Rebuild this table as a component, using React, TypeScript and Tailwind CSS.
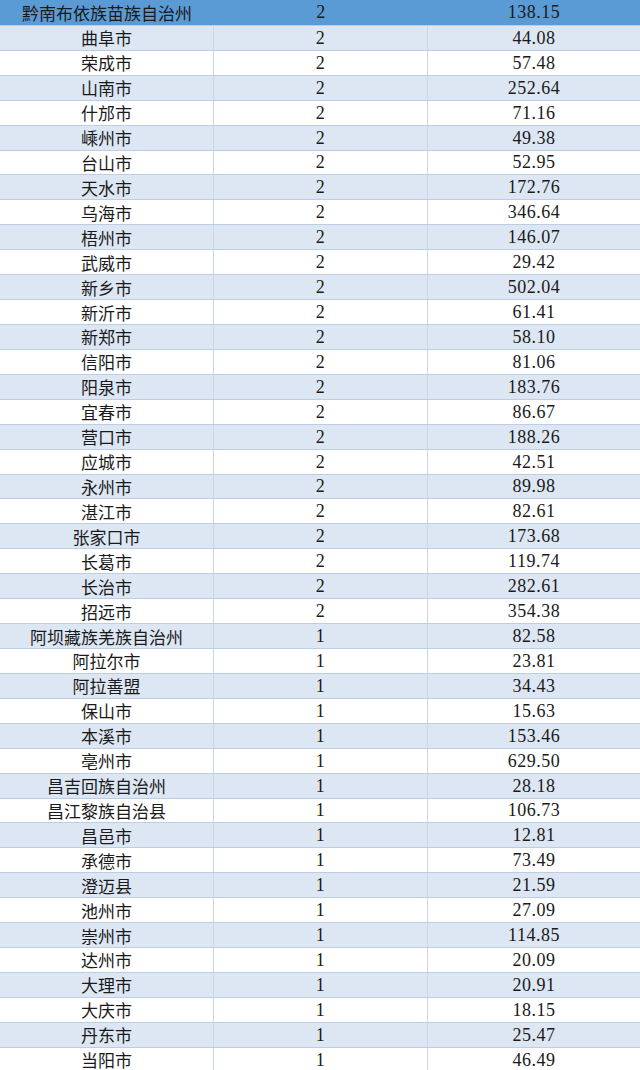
import React from "react";

const rows: [string, string, string][] = [
  ["黔南布依族苗族自治州", "2", "138.15"],
  ["曲阜市", "2", "44.08"],
  ["荣成市", "2", "57.48"],
  ["山南市", "2", "252.64"],
  ["什邡市", "2", "71.16"],
  ["嵊州市", "2", "49.38"],
  ["台山市", "2", "52.95"],
  ["天水市", "2", "172.76"],
  ["乌海市", "2", "346.64"],
  ["梧州市", "2", "146.07"],
  ["武威市", "2", "29.42"],
  ["新乡市", "2", "502.04"],
  ["新沂市", "2", "61.41"],
  ["新郑市", "2", "58.10"],
  ["信阳市", "2", "81.06"],
  ["阳泉市", "2", "183.76"],
  ["宜春市", "2", "86.67"],
  ["营口市", "2", "188.26"],
  ["应城市", "2", "42.51"],
  ["永州市", "2", "89.98"],
  ["湛江市", "2", "82.61"],
  ["张家口市", "2", "173.68"],
  ["长葛市", "2", "119.74"],
  ["长治市", "2", "282.61"],
  ["招远市", "2", "354.38"],
  ["阿坝藏族羌族自治州", "1", "82.58"],
  ["阿拉尔市", "1", "23.81"],
  ["阿拉善盟", "1", "34.43"],
  ["保山市", "1", "15.63"],
  ["本溪市", "1", "153.46"],
  ["亳州市", "1", "629.50"],
  ["昌吉回族自治州", "1", "28.18"],
  ["昌江黎族自治县", "1", "106.73"],
  ["昌邑市", "1", "12.81"],
  ["承德市", "1", "73.49"],
  ["澄迈县", "1", "21.59"],
  ["池州市", "1", "27.09"],
  ["崇州市", "1", "114.85"],
  ["达州市", "1", "20.09"],
  ["大理市", "1", "20.91"],
  ["大庆市", "1", "18.15"],
  ["丹东市", "1", "25.47"],
  ["当阳市", "1", "46.49"],
];

export default function App() {
  return (
    <div className="w-[640px] h-[1070px] overflow-hidden bg-white">
      {rows.map((r, i) => {
        const header = i === 0;
        const rowCls = header
          ? "bg-[#5b9bd5]"
          : i % 2 === 1
          ? "bg-[#dde7f3] border-t border-[#bccde4]"
          : "bg-white border-t border-[#bccde4]";
        const vline = header ? "" : "border-r border-[#cbd7e7]";
        return (
          <div key={i} className={`flex h-[24.93px] text-[#1a1a1a] ${rowCls}`}>
            <div
              className={`w-[214px] flex items-center justify-center text-[17px] leading-none font-['Noto_Sans_CJK_SC',sans-serif] ${vline}`}
            >
              {r[0]}
            </div>
            <div
              className={`w-[214px] flex items-center justify-center text-[18px] leading-none tracking-[0.5px] font-['Liberation_Serif',serif] ${vline}`}
            >
              {r[1]}
            </div>
            <div className="flex-1 flex items-center justify-center text-[18px] leading-none tracking-[0.5px] font-['Liberation_Serif',serif]">
              {r[2]}
            </div>
          </div>
        );
      })}
    </div>
  );
}
